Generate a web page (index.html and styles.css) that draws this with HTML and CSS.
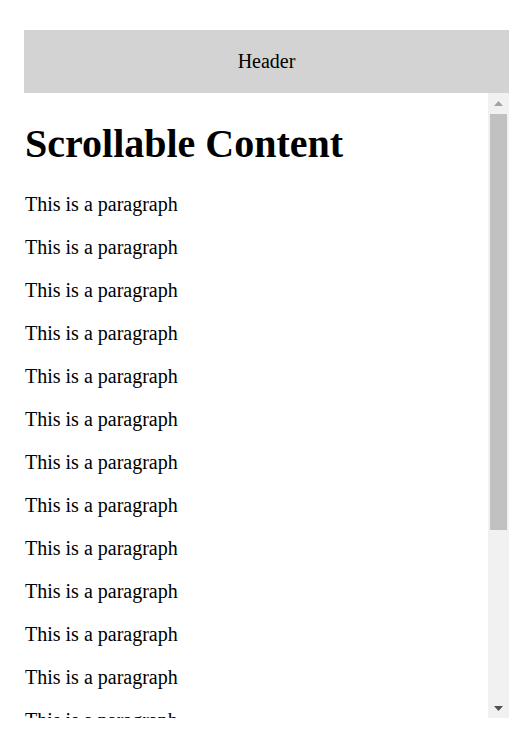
FILE: index.html
```html
<!DOCTYPE html>
<html lang="en">
<head>
<meta charset="utf-8">
<title>Scrollable Content</title>
<link rel="stylesheet" href="styles.css">
</head>
<body>
  <div class="page">
    <header class="header">Header</header>
    <div class="viewport">
      <main class="scroller">
        <h1 class="title">Scrollable Content</h1>
        <p class="para">This is a paragraph</p>
        <p class="para">This is a paragraph</p>
        <p class="para">This is a paragraph</p>
        <p class="para">This is a paragraph</p>
        <p class="para">This is a paragraph</p>
        <p class="para">This is a paragraph</p>
        <p class="para">This is a paragraph</p>
        <p class="para">This is a paragraph</p>
        <p class="para">This is a paragraph</p>
        <p class="para">This is a paragraph</p>
        <p class="para">This is a paragraph</p>
        <p class="para">This is a paragraph</p>
        <p class="para">This is a paragraph</p>
        <p class="para">This is a paragraph</p>
        <p class="para">This is a paragraph</p>
        <p class="para">This is a paragraph</p>
        <p class="para">This is a paragraph</p>
        <p class="para">This is a paragraph</p>
      </main>
      <div class="scrollbar" aria-hidden="true">
        <div class="sb-button">
          <svg width="9" height="5" viewBox="0 0 9 5"><polygon points="4.5,0 9,5 0,5" fill="#a3a3a3"/></svg>
        </div>
        <div class="sb-track">
          <div class="sb-thumb"></div>
        </div>
        <div class="sb-button">
          <svg width="9" height="5" viewBox="0 0 9 5"><polygon points="0,0 9,0 4.5,5" fill="#505050"/></svg>
        </div>
      </div>
    </div>
  </div>
</body>
</html>
```

FILE: styles.css
```css
html, body {
  margin: 0;
  padding: 0;
  background: #ffffff;
}

body {
  font-family: "Liberation Serif", "Times New Roman", serif;
  color: #000000;
}

.page {
  padding: 30px 21px 0 24px;
  display: flex;
  flex-direction: column;
}

.header {
  height: 63px;
  background: #d3d3d3;
  display: flex;
  align-items: center;
  justify-content: center;
  font-size: 20px;
}

.viewport {
  height: 625px;
  display: flex;
}

.scroller {
  flex: 1;
  min-width: 0;
  overflow: hidden;
  padding-left: 1px;
}

.title {
  font-size: 40px;
  line-height: 46px;
  font-weight: bold;
  margin: 28px 0 26px;
}

.para {
  font-size: 20px;
  line-height: 23px;
  margin: 20px 0;
}

.scrollbar {
  width: 21px;
  flex: none;
  background: #f1f1f1;
  display: flex;
  flex-direction: column;
}

.sb-button {
  height: 20px;
  flex: none;
  display: flex;
  align-items: center;
  justify-content: center;
}

.sb-button svg {
  display: block;
}

.sb-track {
  flex: 1;
  padding: 1px 2px;
}

.sb-thumb {
  height: 416px;
  background: #c1c1c1;
}
```
